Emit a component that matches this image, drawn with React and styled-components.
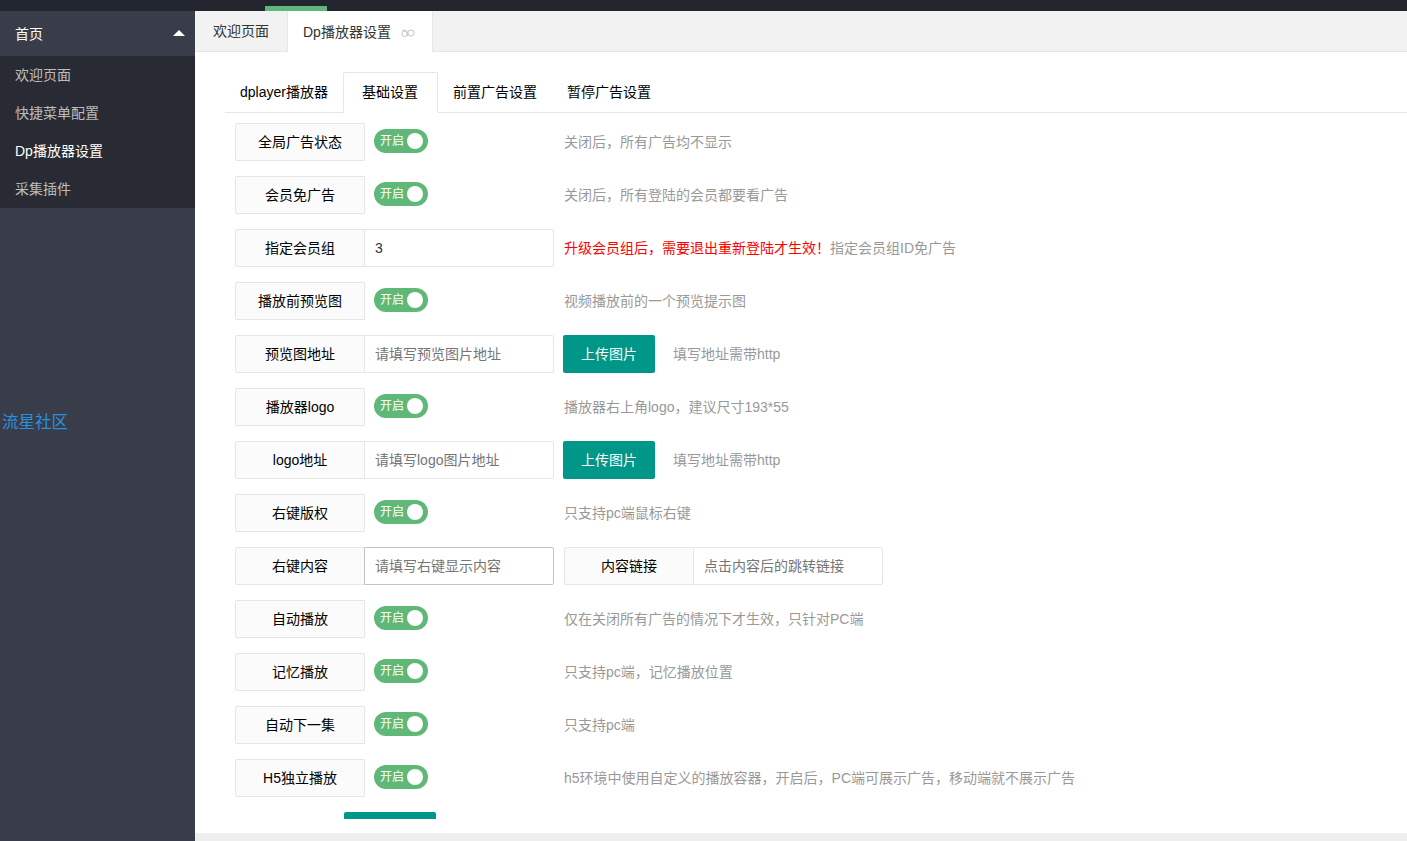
import React from "react";
import styled, { createGlobalStyle } from "styled-components";

const Global = createGlobalStyle`
  html, body {
    margin: 0;
    padding: 0;
    height: 100%;
    overflow: hidden;
  }
  body {
    font-family: "Liberation Sans", "Noto Sans CJK SC", sans-serif;
    font-size: 14px;
    color: #333;
    background: #fff;
  }
  * {
    box-sizing: border-box;
  }
`;

const Page = styled.div`
  height: 841px;
  display: flex;
  flex-direction: column;
`;

const TopBar = styled.div`
  height: 11px;
  flex: none;
  background: #23262e;
  padding-left: 265px;
  padding-top: 6px;
`;

const NavBar = styled.div`
  width: 62px;
  height: 5px;
  background: #5fb878;
`;

const Shell = styled.div`
  flex: 1;
  min-height: 0;
  display: flex;
`;

const Side = styled.aside`
  width: 195px;
  flex: none;
  background: #393d49;
  display: flex;
  flex-direction: column;
`;

const NavHead = styled.div`
  height: 45px;
  padding: 0 10px 2px 15px;
  display: flex;
  align-items: center;
  justify-content: space-between;
  color: #fff;
`;

const Caret = styled.span`
  width: 0;
  height: 0;
  border: 6px solid transparent;
  border-top: 0;
  border-bottom-color: #fff;
`;

const NavChild = styled.div`
  background: #282b33;
  height: 152px;
  flex: none;
`;

const NavItem = styled.div`
  height: 38px;
  line-height: 38px;
  padding-left: 15px;
  color: ${(p) => (p.$on ? "#fff" : "rgba(255,255,255,.7)")};
`;

const SideLink = styled.a`
  margin-top: 201px;
  padding-left: 2px;
  font-size: 16.5px;
  line-height: 26px;
  color: #2d8fdd;
`;

const Main = styled.main`
  flex: 1;
  min-width: 0;
  display: flex;
  flex-direction: column;
  background: #fff;
`;

const PageTabs = styled.div`
  height: 41px;
  flex: none;
  display: flex;
  background: #f2f2f2;
  border-bottom: 1px solid #e6e6e6;
`;

const PageTab = styled.div`
  height: 41px;
  display: flex;
  align-items: center;
  padding: 0 ${(p) => (p.$on ? "16px" : "18px")} 2px ${(p) => (p.$on ? "15px" : "18px")};
  background: ${(p) => (p.$on ? "#fff" : "transparent")};
  border-right: ${(p) => (p.$on ? "1px solid #e6e6e6" : "0")};
  border-bottom: ${(p) => (p.$on ? "0" : "1px solid #e6e6e6")};
  color: #333;
  width: ${(p) => (p.$on ? "146px" : "92px")};
  white-space: nowrap;
  border-left: ${(p) => (p.$on ? "1px solid #e6e6e6" : "0")};
`;

const CloseIcon = styled.svg`
  width: 14px;
  height: 8px;
  margin-left: 10px;
  margin-top: 5px;
  flex: none;
`;

const Body = styled.div`
  height: 767px;
  flex: none;
  overflow: hidden;
  padding: 20px 0 0 30px;
`;

const InnerTabs = styled.div`
  height: 41px;
  display: flex;
  border-bottom: 1px solid #e6e6e6;
`;

const InnerTab = styled.div`
  height: 41px;
  padding: 0 ${(p) => (p.$on ? "19px" : "15px")} 0 ${(p) => (p.$on ? "18px" : "15px")};
  line-height: ${(p) => (p.$on ? "36px" : "38px")};
  padding-top: 1px;
  color: #000;
  background: ${(p) => (p.$on ? "#fff" : "transparent")};
  border: ${(p) => (p.$on ? "1px solid #e6e6e6" : "0")};
  border-bottom: ${(p) => (p.$on ? "1px solid #fff" : "0")};
  border-radius: ${(p) => (p.$on ? "2px 2px 0 0" : "0")};
  white-space: nowrap;
`;

const Form = styled.div`
  padding: 10px 0 0 10px;
`;

const Row = styled.div`
  display: flex;
  align-items: flex-start;
  height: 38px;
  margin-bottom: 15px;
`;

const Label = styled.label`
  width: 130px;
  height: 38px;
  flex: none;
  line-height: 36px;
  text-align: center;
  color: #000;
  background: #fbfbfb;
  border: 1px solid #e6e6e6;
  border-radius: 2px 0 0 2px;
`;

const Field = styled.input`
  width: 190px;
  height: 38px;
  flex: none;
  margin-left: -1px;
  padding: 0 10px;
  font: inherit;
  color: #333;
  background: #fff;
  border: 1px solid ${(p) => (p.$focus ? "#c2c2c2" : "#e6e6e6")};
  border-radius: 0 2px 2px 0;
  outline: none;
  &::placeholder {
    color: #757575;
    opacity: 1;
  }
`;

const SwitchWrap = styled.div`
  width: 199px;
  flex: none;
  padding: 6px 0 0 9px;
`;

const Switch = styled.div`
  position: relative;
  width: 54px;
  height: 24px;
  border-radius: 20px;
  background: #5fb878;
  color: #fff;
  font-size: 12px;
  line-height: 24px;
  padding-left: 6px;
`;

const Knob = styled.i`
  position: absolute;
  top: 4px;
  right: 5px;
  width: 16px;
  height: 16px;
  border-radius: 50%;
  background: #fff;
`;

const Hint = styled.div`
  line-height: 38px;
  color: #999;
  white-space: nowrap;
  margin-left: ${(p) => p.$left || 0}px;
`;

const Red = styled.span`
  color: #f00;
`;

const Upload = styled.button`
  width: 92px;
  height: 38px;
  flex: none;
  margin-left: 9px;
  padding: 0 0 2px;
  border: 0;
  border-radius: 2px;
  background: #009688;
  color: #fff;
  font: inherit;
`;

const Group = styled.div`
  display: flex;
  margin-left: 10px;
`;

const Submit = styled(Upload)`
  display: block;
  margin: 0 0 0 109px;
`;

const Bottom = styled.div`
  height: 14px;
  flex: none;
  background: #fff;
`;

const Footer = styled.div`
  flex: 1;
  background: #eee;
`;

const Toggle = () => (
  <SwitchWrap>
    <Switch>
      开启
      <Knob />
    </Switch>
  </SwitchWrap>
);

const menu = ["欢迎页面", "快捷菜单配置", "Dp播放器设置", "采集插件"];

const toggles = {
  top: [
    ["全局广告状态", "关闭后，所有广告均不显示"],
    ["会员免广告", "关闭后，所有登陆的会员都要看广告"],
  ],
  bottom: [
    ["自动播放", "仅在关闭所有广告的情况下才生效，只针对PC端"],
    ["记忆播放", "只支持pc端，记忆播放位置"],
    ["自动下一集", "只支持pc端"],
    ["H5独立播放", "h5环境中使用自定义的播放容器，开启后，PC端可展示广告，移动端就不展示广告"],
  ],
};

const ToggleRow = ({ label, hint }) => (
  <Row>
    <Label>{label}</Label>
    <Toggle />
    <Hint>{hint}</Hint>
  </Row>
);

export default function App() {
  return (
    <Page>
      <Global />
      <TopBar>
        <NavBar />
      </TopBar>
      <Shell>
        <Side>
          <NavHead>
            首页
            <Caret />
          </NavHead>
          <NavChild>
            {menu.map((m) => (
              <NavItem key={m} $on={m === "Dp播放器设置"}>
                {m}
              </NavItem>
            ))}
          </NavChild>
          <SideLink>流星社区</SideLink>
        </Side>
        <Main>
          <PageTabs>
            <PageTab>欢迎页面</PageTab>
            <PageTab $on>
              Dp播放器设置
              <CloseIcon viewBox="0 0 14 8" fill="none" stroke="#c4c4c4" strokeWidth="1">
                <path d="M1.2 2 A3 3 0 0 1 6.2 3.2 V7 M6.2 4 A2.4 2.4 0 1 0 1 5.2 A2.4 2.4 0 0 0 6.2 5" />
                <circle cx="10" cy="4" r="3.1" />
              </CloseIcon>
            </PageTab>
          </PageTabs>
          <Body>
            <InnerTabs>
              <InnerTab>dplayer播放器</InnerTab>
              <InnerTab $on>基础设置</InnerTab>
              <InnerTab>前置广告设置</InnerTab>
              <InnerTab>暂停广告设置</InnerTab>
            </InnerTabs>
            <Form>
              {toggles.top.map(([l, h]) => (
                <ToggleRow key={l} label={l} hint={h} />
              ))}
              <Row>
                <Label>指定会员组</Label>
                <Field defaultValue="3" />
                <Hint $left={10}>
                  <Red>升级会员组后，需要退出重新登陆才生效！</Red>指定会员组ID免广告
                </Hint>
              </Row>
              <ToggleRow label="播放前预览图" hint="视频播放前的一个预览提示图" />
              <Row>
                <Label>预览图地址</Label>
                <Field placeholder="请填写预览图片地址" />
                <Upload>上传图片</Upload>
                <Hint $left={18}>填写地址需带http</Hint>
              </Row>
              <ToggleRow label="播放器logo" hint="播放器右上角logo，建议尺寸193*55" />
              <Row>
                <Label>logo地址</Label>
                <Field placeholder="请填写logo图片地址" />
                <Upload>上传图片</Upload>
                <Hint $left={18}>填写地址需带http</Hint>
              </Row>
              <ToggleRow label="右键版权" hint="只支持pc端鼠标右键" />
              <Row>
                <Label>右键内容</Label>
                <Field $focus placeholder="请填写右键显示内容" />
                <Group>
                  <Label>内容链接</Label>
                  <Field placeholder="点击内容后的跳转链接" />
                </Group>
              </Row>
              {toggles.bottom.map(([l, h]) => (
                <ToggleRow key={l} label={l} hint={h} />
              ))}
              <Submit />
            </Form>
          </Body>
          <Bottom />
          <Footer />
        </Main>
      </Shell>
    </Page>
  );
}
